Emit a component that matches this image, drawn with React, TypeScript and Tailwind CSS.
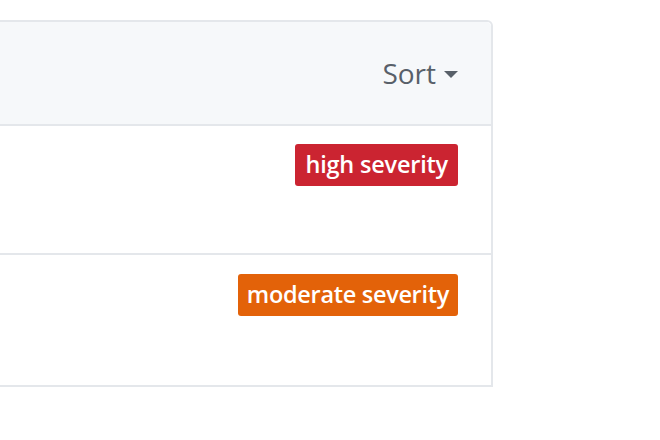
export default function App() {
  return (
    <div className="w-[660px] h-[440px] bg-white pt-[20px] font-['Open_Sans',sans-serif]">
      <div className="w-[493px] border-2 border-l-0 border-[#e4e7eb] rounded-tr-[6px]">
        {/* header */}
        <div className="h-[104px] bg-[#f6f8fa] rounded-tr-[5px] flex items-center justify-end pr-[33px] border-b-2 border-[#e4e7eb]">
          <button className="flex items-center gap-[8px] text-[#586069] text-[28px] leading-none">
            Sort
            <span className="w-0 h-0 border-x-[7px] border-x-transparent border-t-[7px] border-t-[#586069] mt-[3px]" />
          </button>
        </div>
        {/* rows */}
        <div className="h-[129px] flex justify-end items-start pt-[18px] pr-[33px] border-b-2 border-[#e4e7eb]">
          <span className="h-[42px] px-[10px] flex items-center rounded-[3px] bg-[#cb2431] text-white text-[23.5px] font-semibold tracking-[-0.2px]">
            high severity
          </span>
        </div>
        <div className="h-[130px] flex justify-end items-start pt-[19px] pr-[33px]">
          <span className="h-[42px] px-[9px] flex items-center rounded-[3px] bg-[#e36209] text-white text-[23.5px] font-semibold tracking-[-0.3px]">
            moderate severity
          </span>
        </div>
      </div>
    </div>
  );
}
